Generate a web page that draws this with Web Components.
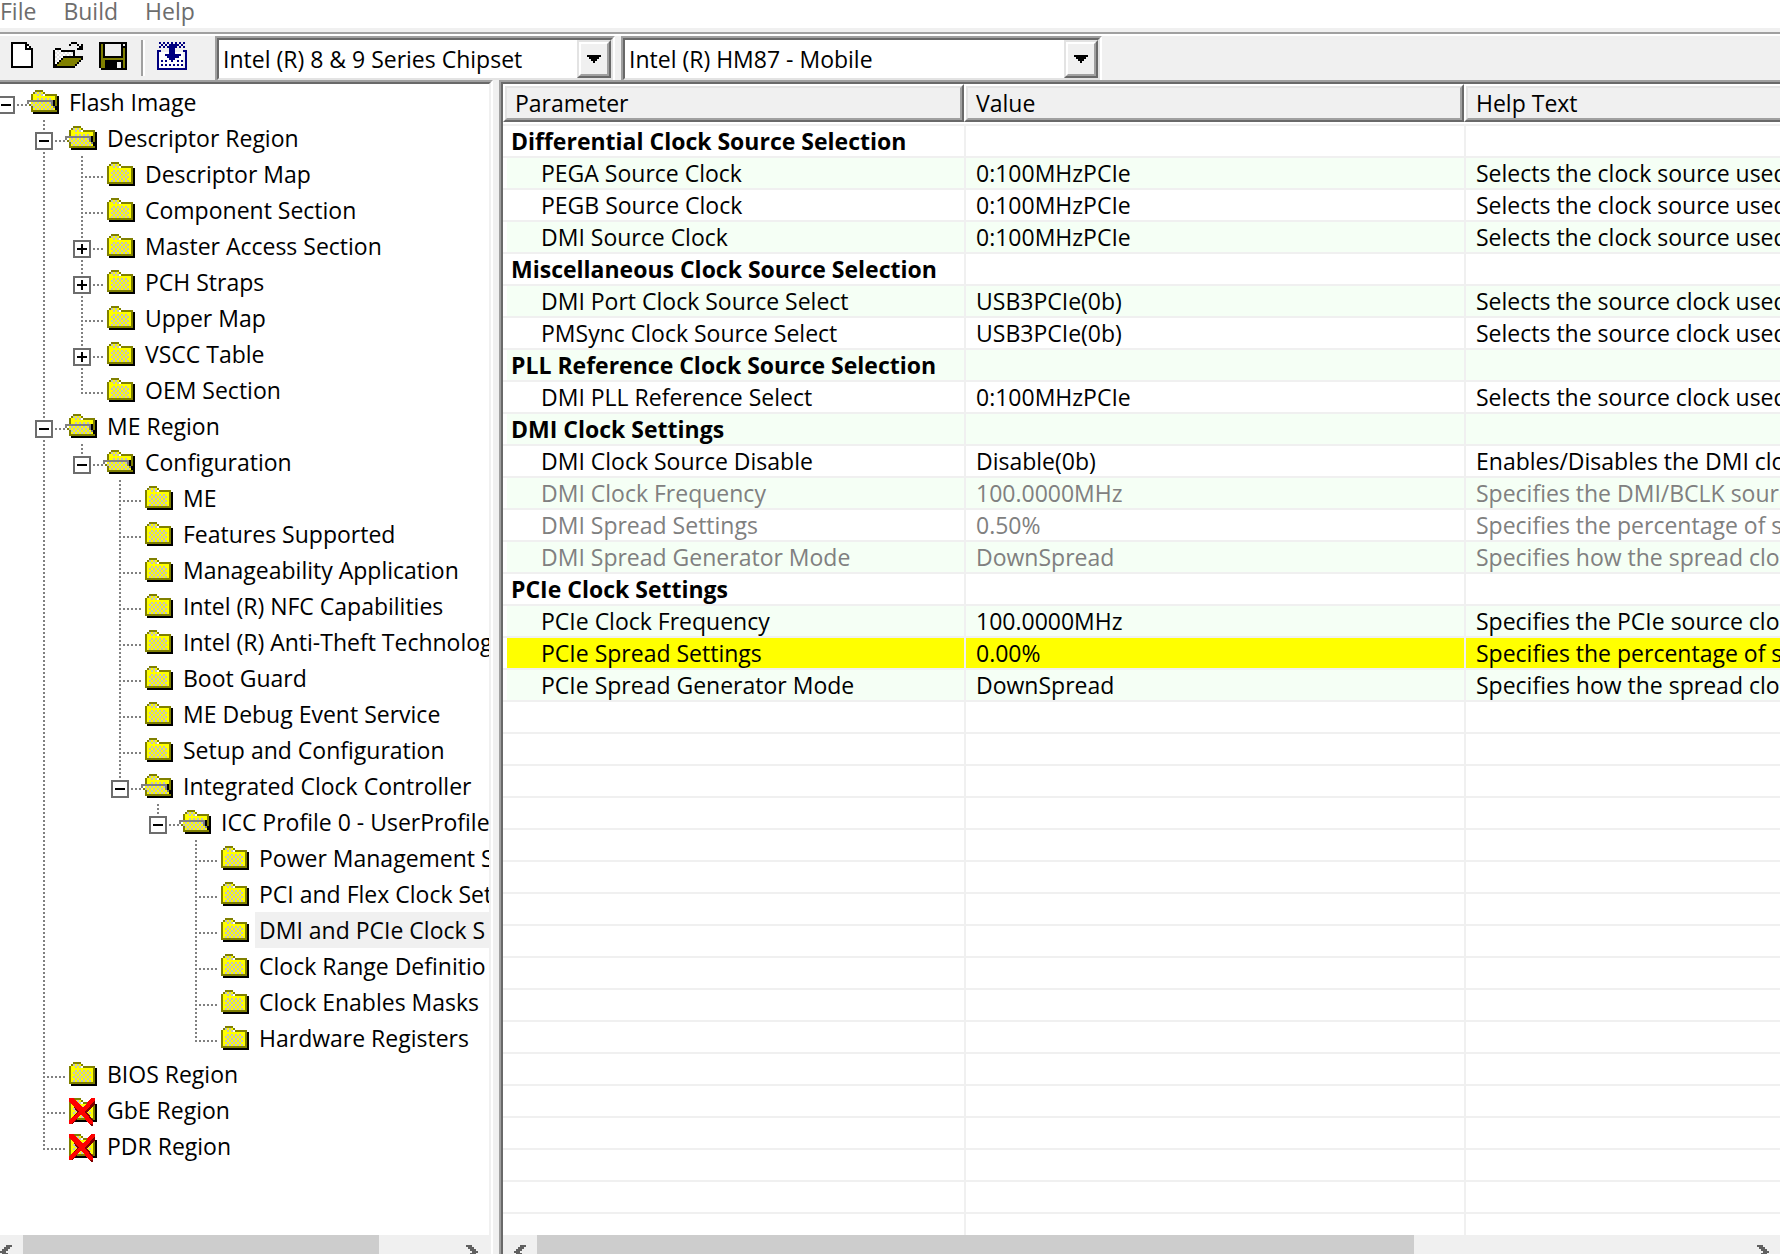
<!DOCTYPE html>
<html lang="en">
<head>
<meta charset="utf-8">
<title>Flash Image Tool</title>
<style>
  html, body { height: 100%; margin: 0; }
  body {
    overflow: hidden;
    background: #f0f0f0;
    color: #000;
    font: 23px/30px "Open Sans", "Noto Sans", sans-serif;
    --face: #f0f0f0;
    --light: #e3e3e3;
    --shade: #a0a0a0;
    --dark: #696969;
  }
</style>
</head>
<body>
<app-window>
  <menu-bar slot="menu" items="File,Build,Help"></menu-bar>
  <tool-bar slot="tools">
    <tool-button icon="new" label="New"></tool-button>
    <tool-button icon="open" label="Open"></tool-button>
    <tool-button icon="save" label="Save"></tool-button>
    <tool-separator></tool-separator>
    <tool-button icon="build" label="Build image"></tool-button>
    <combo-box class="family" label="Chipset family" value="Intel (R) 8 &amp; 9 Series Chipset"></combo-box>
    <combo-box class="sku" label="Chipset SKU" value="Intel (R) HM87 - Mobile"></combo-box>
  </tool-bar>
  <tree-view slot="tree">
    <tree-item root open label="Flash Image">
      <tree-item open label="Descriptor Region">
        <tree-item label="Descriptor Map"></tree-item>
        <tree-item label="Component Section"></tree-item>
        <tree-item folded label="Master Access Section"></tree-item>
        <tree-item folded label="PCH Straps"></tree-item>
        <tree-item label="Upper Map"></tree-item>
        <tree-item folded label="VSCC Table"></tree-item>
        <tree-item label="OEM Section"></tree-item>
      </tree-item>
      <tree-item open label="ME Region">
        <tree-item open label="Configuration">
          <tree-item label="ME"></tree-item>
          <tree-item label="Features Supported"></tree-item>
          <tree-item label="Manageability Application"></tree-item>
          <tree-item label="Intel (R) NFC Capabilities"></tree-item>
          <tree-item label="Intel (R) Anti-Theft Technolog"></tree-item>
          <tree-item label="Boot Guard"></tree-item>
          <tree-item label="ME Debug Event Service"></tree-item>
          <tree-item label="Setup and Configuration"></tree-item>
          <tree-item open label="Integrated Clock Controller">
            <tree-item open label="ICC Profile 0 - UserProfile">
              <tree-item label="Power Management S"></tree-item>
              <tree-item label="PCI and Flex Clock Set"></tree-item>
              <tree-item selected label="DMI and PCIe Clock S"></tree-item>
              <tree-item label="Clock Range Definitio"></tree-item>
              <tree-item label="Clock Enables Masks"></tree-item>
              <tree-item label="Hardware Registers"></tree-item>
            </tree-item>
          </tree-item>
        </tree-item>
      </tree-item>
      <tree-item label="BIOS Region"></tree-item>
      <tree-item disabled label="GbE Region"></tree-item>
      <tree-item disabled label="PDR Region"></tree-item>
    </tree-item>
  </tree-view>
  <param-list slot="list"></param-list>
</app-window>

<script>
const define = (name, html, setup) => {
  const template = document.createElement('template');
  template.innerHTML = html;
  customElements.define(name, class extends HTMLElement {
    connectedCallback() {
      if (this.shadowRoot) return;
      this.attachShadow({ mode: 'open' }).append(template.content.cloneNode(true));
      if (setup) setup.call(this, this.shadowRoot);
    }
  });
};

const checker = (a, b) => `<defs><pattern id="c" width="2" height="2" patternUnits="userSpaceOnUse"><path fill="${a}" d="M0 0h2v2H0z"/><path fill="${b}" d="M0 0h1v1H0zM1 1h1v1H1z"/></pattern></defs>`;

/* All icons are drawn on a grid where one unit is two pixels. */
const closedFolder = `
  <path fill="#000" d="M4 11h12V3h1v9H4z"/>
  <path fill="#ff0" d="M4 2h1V1h4v2h6v7H4z"/>
  <path fill="url(#c)" d="M5 1h4v2H5zM5 4h9v6H5z"/>
  <path fill="#808000" d="M5 0h4v1H5zM4 1h1v1H4zM9 1h1v1H9zM3 2h1v8H3zM10 2h6v1h-6zM15 3h1v7h-1zM3 10h13v1H3z"/>`;
const icons = {
  closed: closedFolder,
  open: `
  <path fill="#000" d="M4 11h12V3h1v9H4z"/>
  <path fill="#ff0" d="M4 2h1V1h4v2h6v7H4z"/>
  <path fill="url(#c)" d="M5 1h4v2H5zM5 4h9v1H5zM3 6h10v2h1v2H4V8H3z"/>
  <path fill="#808000" d="M5 0h4v1H5zM4 1h1v1H4zM9 1h1v1H9zM3 2h1v3H3zM10 2h6v1h-6zM15 3h1v8h-1zM2 7h1v1H2zM3 8h1v2H3zM3 10h12v1H3z"/>
  <path fill="#808080" d="M1 5h13v1H1zM1 6h1v1H1zM13 6h1v2h-1zM14 8h1v1h-1z"/>
  <path fill="#000" d="M14 5h1v3h-1zM15 8h1v2h-1z"/>`,
  disabled: closedFolder + `
  <path fill="#800000" d="M4 2h1l5 4 4-5h2v2l-4 4 3 4v3h-1l-5-6-4 5H3v-1l4-5z"/>
  <path fill="#f00" d="M3 0h2l5 5 4-5h2v1l-5 6 4 5v1h-2l-4-5-5 5H3v-2l5-4-5-5z"/>`,
  new: `<path fill="#fff" d="M3 1h6l3 3v8H3z"/>
  <path fill="#000" d="M2 0h8v1H3v11h9V4h1v9H2zM9 1h1v2h2v1H9zM10 1h1v1h-1zM11 2h1v1h-1zM12 3h1v1h-1z"/>`,
  open_file: `<path fill="url(#c)" d="M1 4h3v1h6v2H5v1H4v2H3v1H2v1H1z"/>
  <path fill="#808000" d="M5 8h9v1h-1v1h-1v1h-1v1H1v-1h1v-1h1V9h2z"/>
  <path fill="#000" d="M9 0h3v1H9zM8 1h1v1H8zM12 1h1v1h-1zM14 1h1v3h-3V3h1V2h1zM1 3h3v1H1zM0 4h1v9H0zM4 4h7v3h-1V5H4zM5 7h10v1H5zM4 8h1v1H4zM3 9h1v1H3zM2 10h1v1H2zM1 11h1v1H1zM14 8h1v1h-1zM13 9h1v1h-1zM12 10h1v1h-1zM11 11h1v1h-1zM0 12h11v1H0z"/>`,
  save: `<path fill="#000" d="M0 0h14v14H1v-1H0z"/>
  <path fill="#808000" d="M1 1h1v7h10V3h1v10h-1V9H3v4H1z"/>
  <path fill="#f0f0f0" d="M3 1h8v6H3zM12 1h1v1h-1zM9 10h2v3H9z"/>`,
  build: `<path fill="#fff" d="M2 5h12v8H2z"/><path fill="url(#c)" d="M2 0h13v3H2z"/>
  <path fill="#000080" d="M1 4h2v1H2v8h13v1H1zM14 4h2v10h-1V5h-1zM7 1h4v1H7zM6 2h5v1H6zM7 3h3v3h3v1h-1v1h-2v1H9v1H8V9H7V8H6V7H5V6h2zM15 13h1v1h-1z"/>
  <path fill="#000080" d="M3 9h1v1H3zM5 9h1v1H5zM11 9h1v1h-1zM13 9h1v1h-1zM3 11h1v1H3zM5 11h1v1H5zM7 11h1v1H7zM9 11h1v1H9zM11 11h1v1h-1zM13 11h1v1h-1z"/>`
};

define('menu-bar', `
  <style>
    :host { display: flex; align-items: flex-start; gap: 27px; height: 28px; background: #fff; }
    button { border: 0; padding: 0; background: none; font: inherit; line-height: 22px; height: 22px; color: #6d6d6d; }
  </style>`, function (root) {
  for (const text of this.getAttribute('items').split(',')) {
    const button = document.createElement('button');
    button.textContent = text;
    root.append(button);
  }
});

define('tool-bar', `
  <style>
    :host { display: flex; height: 44px; margin-top: 4px; border-top: 2px solid var(--shade); box-shadow: inset 0 2px #fff; padding-top: 2px; }
    ::slotted(.family) { width: 400px; margin-left: 21px; }
    ::slotted(.sku) { width: 481px; margin-left: 6px; }
  </style>
  <slot></slot>`);

define('tool-separator', `
  <style>
    :host { display: block; width: 2px; margin: 4px 3px; background: var(--shade); border-right: 2px solid #fff; }
  </style>`);

define('tool-button', `
  <style>
    :host { display: block; }
    button { width: 46px; height: 44px; border: 0; padding: 6px 7px; background: none; }
    svg { display: block; width: 32px; height: 32px; }
  </style>
  <button><svg viewBox="0 0 16 16" shape-rendering="crispEdges"></svg></button>`, function (root) {
  const name = this.getAttribute('icon');
  root.querySelector('button').setAttribute('aria-label', this.getAttribute('label'));
  const fill = name === 'build' ? checker('#f0f0f0', '#000080') : checker('#fff', '#e3e3e3');
  root.querySelector('svg').innerHTML = fill + (name === 'open' ? icons.open_file : icons[name]);
});

define('combo-box', `
  <style>
    :host { display: block; box-sizing: border-box; border: 2px solid; border-color: var(--shade) #fff #fff var(--shade); border-bottom: 0; }
    .field { display: grid; grid-template-columns: 1fr 34px; height: 38px; border: 2px solid; border-color: var(--dark) var(--light) var(--light) var(--dark); background: #fff; }
    select { grid-area: 1 / 1 / 2 / 3; appearance: none; border: 0; border-radius: 0; margin: 0; padding: 0 38px 0 4px; background: none; font: inherit; color: inherit; outline: 0; }
    .drop { grid-area: 1 / 2; pointer-events: none; box-sizing: border-box; border: 2px solid; border-color: var(--light) var(--dark) var(--dark) var(--light); background: var(--face); }
    .face { box-sizing: border-box; height: 100%; display: grid; place-items: center; border: 2px solid; border-color: #fff var(--shade) var(--shade) #fff; }
    svg { width: 14px; height: 8px; }
  </style>
  <div class="field">
    <select></select>
    <div class="drop"><div class="face"><svg viewBox="0 0 7 4" shape-rendering="crispEdges"><path d="M0 0h7v1H6v1H5v1H4v1H3V3H2V2H1V1H0z"/></svg></div></div>
  </div>`, function (root) {
  const select = root.querySelector('select');
  select.setAttribute('aria-label', this.getAttribute('label'));
  select.add(new Option(this.getAttribute('value')));
});

define('scroll-bar', `
  <style>
    :host { display: flex; height: 19px; overflow: hidden; background: var(--face); }
    button { flex: none; width: 34px; height: 34px; border: 0; padding: 8px 11px; background: none; }
    svg { display: block; width: 12px; height: 14px; fill: #606060; }
    .thumb { background: #cdcdcd; }
  </style>
  <button aria-label="Scroll left"><svg viewBox="0 0 6 7" shape-rendering="crispEdges"><path d="M3 0h3v1H5v1H4v1H3v1h1v1h1v1h1v1H3V6H2V5H1V4H0V3h1V2h1V1h1z"/></svg></button>
  <div class="thumb"></div><div class="rest"></div>
  <button aria-label="Scroll right"><svg viewBox="0 0 6 7" shape-rendering="crispEdges"><path d="M0 0h3v1h1v1h1v1h1v1H5v1H4v1H3v1H0V6h1V5h1V4h1V3H2V2H1V1H0z"/></svg></button>`, function (root) {
  root.querySelector('.thumb').style.flex = this.getAttribute('thumb');
  root.querySelector('.rest').style.flex = this.getAttribute('rest');
});

define('tree-item', `
  <style>
    :host { display: block; --dots: #808080;
      background: repeating-linear-gradient(180deg, var(--dots) 0 2px, transparent 2px 4px) 18px 0 / 2px 100% no-repeat; }
    :host(:last-child) { background-size: 2px 22px; }
    :host([root]) { background: none; }
    .row { display: flex; height: 36px;
      background: repeating-linear-gradient(90deg, var(--dots) 0 2px, transparent 2px 4px) 18px 20px / 22px 2px no-repeat; }
    .twig { flex: none; width: 38px; }
    button { display: block; width: 18px; height: 18px; margin: 12px 10px 0; padding: 2px; border: 2px solid #6d6d6d; background: #fff; box-shadow: 0 0 0 2px #fff; }
    button svg { display: block; width: 10px; height: 10px; }
    .icon { flex: none; width: 34px; height: 28px; padding-top: 6px; }
    .label { margin-left: 6px; padding-left: 4px; line-height: 36px; white-space: nowrap; }
    :host([selected]) .label { flex: 1; background: var(--face); }
    .kids { display: block; margin-left: 38px; }
    .kids[hidden] { display: none; }
  </style>
  <div class="row">
    <div class="twig"></div>
    <svg class="icon" viewBox="0 0 17 14" shape-rendering="crispEdges"></svg>
    <span class="label"></span>
  </div>
  <div class="kids" role="group"><slot></slot></div>`, function (root) {
  const open = this.hasAttribute('open');
  const name = open ? 'open' : this.hasAttribute('disabled') ? 'disabled' : 'closed';
  this.setAttribute('role', 'treeitem');
  root.querySelector('.icon').innerHTML = checker('#ff0', '#c0c0c0') + icons[name];
  root.querySelector('.label').textContent = this.getAttribute('label');
  if (open || this.hasAttribute('folded')) {
    const button = document.createElement('button');
    const kids = root.querySelector('.kids');
    const draw = minus => {
      button.innerHTML = `<svg viewBox="0 0 5 5" shape-rendering="crispEdges"><path d="M0 2h5v1H0z${minus ? '' : 'M2 0h1v5H2z'}"/></svg>`;
      button.setAttribute('aria-label', minus ? 'Collapse' : 'Expand');
    };
    kids.hidden = !open;
    draw(open);
    button.addEventListener('click', () => { kids.hidden = !kids.hidden; draw(!kids.hidden); });
    root.querySelector('.twig').append(button);
  }
});

define('tree-view', `
  <style>
    :host { display: flex; min-height: 0; border-top: 2px solid var(--shade); border-right: 2px solid #fff; background: #fff; }
    .inner { flex: 1; min-width: 0; display: flex; flex-direction: column; border-top: 2px solid var(--dark); border-right: 2px solid var(--face); overflow: hidden; }
    .items { flex: 1; min-height: 0; overflow: hidden; margin-left: -13px; }
    scroll-bar { margin-left: -11px; }
  </style>
  <div class="inner">
    <div class="items" role="tree"><slot></slot></div>
    <scroll-bar thumb="356" rest="76"></scroll-bar>
  </div>`);

const rows = [
  ['Differential Clock Source Selection'],
  ['PEGA Source Clock', '0:100MHzPCIe', 'Selects the clock source used'],
  ['PEGB Source Clock', '0:100MHzPCIe', 'Selects the clock source used'],
  ['DMI Source Clock', '0:100MHzPCIe', 'Selects the clock source used'],
  ['Miscellaneous Clock Source Selection'],
  ['DMI Port Clock Source Select', 'USB3PCIe(0b)', 'Selects the source clock used'],
  ['PMSync Clock Source Select', 'USB3PCIe(0b)', 'Selects the source clock used'],
  ['PLL Reference Clock Source Selection'],
  ['DMI PLL Reference Select', '0:100MHzPCIe', 'Selects the source clock used'],
  ['DMI Clock Settings'],
  ['DMI Clock Source Disable', 'Disable(0b)', 'Enables/Disables the DMI clo'],
  ['DMI Clock Frequency', '100.0000MHz', 'Specifies the DMI/BCLK sourc', 'locked'],
  ['DMI Spread Settings', '0.50%', 'Specifies the percentage of sp', 'locked'],
  ['DMI Spread Generator Mode', 'DownSpread', 'Specifies how the spread cloc', 'locked'],
  ['PCIe Clock Settings'],
  ['PCIe Clock Frequency', '100.0000MHz', 'Specifies the PCIe source cloc'],
  ['PCIe Spread Settings', '0.00%', 'Specifies the percentage of sp', 'marked'],
  ['PCIe Spread Generator Mode', 'DownSpread', 'Specifies how the spread cloc']
];
const blankRows = 17;

define('param-list', `
  <style>
    :host { display: flex; min-width: 0; min-height: 0; border: solid var(--shade); border-width: 2px 0 0 2px; background: #fff; }
    .inner { flex: 1; min-width: 0; display: flex; flex-direction: column; border: solid var(--dark); border-width: 2px 0 0 2px; }
    .view { flex: 1; min-height: 0; overflow: hidden; }
    table { width: 100%; table-layout: fixed; border-collapse: separate; border-spacing: 0; }
    col.name { width: 461px; }
    col.value { width: 500px; }
    th { padding: 0 0 2px; border-bottom: 2px solid var(--face); font-weight: 400; text-align: left; }
    th div { border: 2px solid; border-color: #fff var(--dark) var(--dark) #fff; }
    th span { display: block; height: 30px; padding-left: 8px; border: 2px solid; border-color: var(--light) var(--shade) var(--shade) var(--light); background: var(--face); }
    th:last-child div, th:last-child span { border-right: 0; }
    td { height: 30px; padding: 0 0 0 10px; border-left: 2px solid var(--face); border-bottom: 2px solid var(--face); white-space: nowrap; overflow: hidden; }
    td:first-child { padding-left: 38px; border-left: 0; box-shadow: inset 4px 0 #fff; }
    .group td:first-child { padding-left: 8px; font-weight: 700; }
    .data:nth-child(even) { background: #f5fff5; }
    .locked { color: #808080; }
    .marked td { background: #ff0; }
  </style>
  <div class="inner">
    <div class="view">
      <table>
        <colgroup><col class="name"><col class="value"><col></colgroup>
        <thead><tr>
          <th><div><span>Parameter</span></div></th>
          <th><div><span>Value</span></div></th>
          <th><div><span>Help Text</span></div></th>
        </tr></thead>
        <tbody></tbody>
      </table>
    </div>
    <scroll-bar thumb="877" rest="332"></scroll-bar>
  </div>`, function (root) {
  const body = root.querySelector('tbody');
  const add = (cells, className) => {
    const row = body.insertRow();
    row.className = className;
    for (let i = 0; i < 3; i++) row.insertCell().textContent = cells[i] || '';
  };
  for (const row of rows) add(row, 'data ' + (row.length === 1 ? 'group' : row[3] || ''));
  for (let i = 0; i < blankRows; i++) add([], 'blank');
});

define('app-window', `
  <style>
    :host { display: flex; flex-direction: column; height: 100vh; overflow: hidden; }
    .panes { flex: 1; min-height: 0; display: grid; grid-template: minmax(0, 1fr) / 493px minmax(0, 1fr); column-gap: 6px; }
  </style>
  <slot name="menu"></slot>
  <slot name="tools"></slot>
  <div class="panes"><slot name="tree"></slot><slot name="list"></slot></div>`);
</script>
</body>
</html>
